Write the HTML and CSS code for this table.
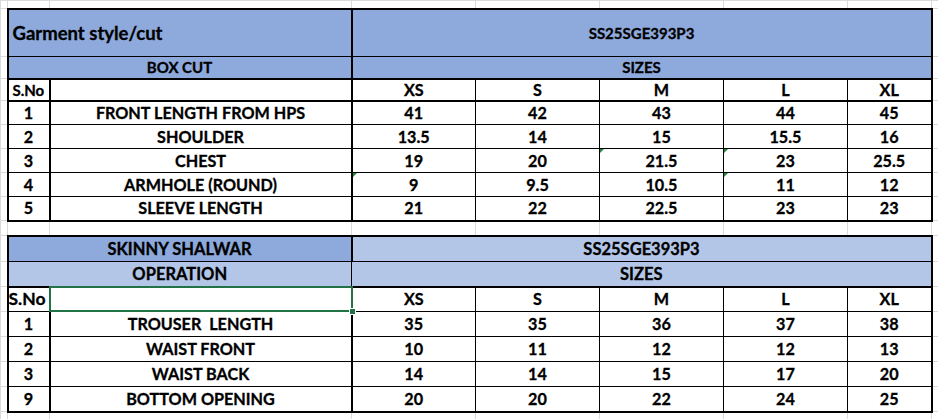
FILE: index.html
```html
<!DOCTYPE html>
<html>
<head>
<meta charset="utf-8">
<title>Measurement sheet</title>
<link rel="stylesheet" href="styles.css">
</head>
<body>
<table class="sheet">
  <colgroup>
    <col class="c-a"><col class="c-b"><col class="c-c">
    <col class="c-s"><col class="c-s"><col class="c-s"><col class="c-s">
    <col class="c-h"><col class="c-i">
  </colgroup>
  <tbody>
    <tr class="r-top"><td></td><td></td><td></td><td></td><td></td><td></td><td></td><td></td><td></td></tr>

    <tr class="r-h1">
      <td></td>
      <td colspan="2" class="t blue bt bl br txt-left title">Garment style/cut</td>
      <td colspan="5" class="t blue bt br sm">SS25SGE393P3</td>
      <td></td>
    </tr>
    <tr class="r-22">
      <td></td>
      <td colspan="2" class="t blue bl br bb sm">BOX CUT</td>
      <td colspan="5" class="t blue br bb sm">SIZES</td>
      <td></td>
    </tr>
    <tr class="r-22">
      <td></td>
      <td class="t bl br txt-left sno">S.No</td>
      <td class="t br"></td>
      <td class="t">XS</td><td class="t">S</td><td class="t">M</td><td class="t">L</td><td class="t br">XL</td>
      <td></td>
    </tr>
    <tr class="r-24">
      <td></td>
      <td class="t bl br bt">1</td>
      <td class="t br bt">FRONT LENGTH FROM HPS</td>
      <td class="t bt">41</td><td class="t bt">42</td><td class="t bt">43</td><td class="t bt">44</td><td class="t br bt">45</td>
      <td></td>
    </tr>
    <tr class="r-24">
      <td></td>
      <td class="t bl br">2</td>
      <td class="t br">SHOULDER</td>
      <td class="t">13.5</td><td class="t">14</td><td class="t">15</td><td class="t">15.5</td><td class="t br">16</td>
      <td></td>
    </tr>
    <tr class="r-24">
      <td></td>
      <td class="t bl br">3</td>
      <td class="t br">CHEST</td>
      <td class="t">19</td><td class="t">20</td><td class="t err">21.5</td><td class="t err">23</td><td class="t br">25.5</td>
      <td></td>
    </tr>
    <tr class="r-24">
      <td></td>
      <td class="t bl br">4</td>
      <td class="t br">ARMHOLE (ROUND)</td>
      <td class="t err">9</td><td class="t">9.5</td><td class="t">10.5</td><td class="t err">11</td><td class="t br">12</td>
      <td></td>
    </tr>
    <tr class="r-24">
      <td></td>
      <td class="t bl br bb">5</td>
      <td class="t br bb">SLEEVE LENGTH</td>
      <td class="t bb">21</td><td class="t bb">22</td><td class="t bb">22.5</td><td class="t bb">23</td><td class="t br bb">23</td>
      <td></td>
    </tr>

    <tr class="r-gap"><td></td><td></td><td></td><td></td><td></td><td></td><td></td><td></td><td></td></tr>

    <tr class="r-26">
      <td></td>
      <td colspan="2" class="t blue bt bl br big">SKINNY SHALWAR</td>
      <td colspan="5" class="t light bt br big">SS25SGE393P3</td>
      <td></td>
    </tr>
    <tr class="r-25">
      <td></td>
      <td colspan="2" class="t light bl bb big">OPERATION</td>
      <td colspan="5" class="t light br bb big">SIZES</td>
      <td></td>
    </tr>
    <tr class="r-25">
      <td></td>
      <td class="t bl br txt-left sno2">S.No</td>
      <td class="t br sel"></td>
      <td class="t">XS</td><td class="t">S</td><td class="t">M</td><td class="t">L</td><td class="t br">XL</td>
      <td></td>
    </tr>
    <tr class="r-25">
      <td></td>
      <td class="t bl br">1</td>
      <td class="t br pre">TROUSER  LENGTH</td>
      <td class="t">35</td><td class="t">35</td><td class="t">36</td><td class="t">37</td><td class="t br">38</td>
      <td></td>
    </tr>
    <tr class="r-25">
      <td></td>
      <td class="t bl br">2</td>
      <td class="t br">WAIST FRONT</td>
      <td class="t">10</td><td class="t">11</td><td class="t">12</td><td class="t">12</td><td class="t br">13</td>
      <td></td>
    </tr>
    <tr class="r-25">
      <td></td>
      <td class="t bl br">3</td>
      <td class="t br">WAIST BACK</td>
      <td class="t">14</td><td class="t">14</td><td class="t">15</td><td class="t">17</td><td class="t br">20</td>
      <td></td>
    </tr>
    <tr class="r-25">
      <td></td>
      <td class="t bl br bb">9</td>
      <td class="t br bb">BOTTOM OPENING</td>
      <td class="t bb">20</td><td class="t bb">20</td><td class="t bb">22</td><td class="t bb">24</td><td class="t br bb">25</td>
      <td></td>
    </tr>

    <tr class="r-end"><td></td><td></td><td></td><td></td><td></td><td></td><td></td><td></td><td></td></tr>
  </tbody>
</table>
</body>
</html>
```
FILE: styles.css
```css
html, body {
  margin: 0;
  padding: 0;
  background: #ffffff;
  overflow: hidden;
}

.sheet {
  border-collapse: collapse;
  table-layout: fixed;
  width: 938px;
  font-family: Lato, "Liberation Sans", sans-serif;
  font-weight: 700;
  color: #000000;
  -webkit-text-stroke: 0.3px #000000;
}

.c-a { width: 7px; }
.c-b { width: 42px; }
.c-c { width: 302px; }
.c-s { width: 124px; }
.c-h { width: 84px; }
.c-i { width: 7px; }

.sheet td {
  box-sizing: border-box;
  border: 1px solid #dadada;
  padding: 0;
  text-align: center;
  vertical-align: middle;
  white-space: nowrap;
  font-size: 16.2px;
  line-height: 16px;
  overflow: visible;
}

.r-top td { height: 8px; }
.r-h1 td { height: 48px; }
.r-22 td { height: 22px; }
.r-24 td { height: 24px; }
.r-gap td { height: 15px; }
.r-26 td { height: 26px; }
.r-25 td { height: 25px; }
.r-end td { height: 8px; }

.sheet td.t { border: 1px solid #000000; }
.sheet td.bt { border-top: 2px solid #000000; }
.sheet td.bb { border-bottom: 2px solid #000000; }
.sheet td.bl { border-left: 2px solid #000000; }
.sheet td.br { border-right: 2px solid #000000; }

.blue { background: #8ea9db; }
.light { background: #b4c6e7; }

.txt-left { text-align: left !important; }
.sheet td.big { font-size: 16.5px; }
.sheet td.sm { font-size: 15px; }
.sheet td.title { padding-left: 4px; font-size: 18.5px; }
.sheet td.sno { padding-left: 4px; font-size: 15px; }
.sheet td.sno2 { padding-left: 0; font-size: 17.5px; }
.pre { white-space: pre !important; }

.err { position: relative; }
.err::before {
  content: "";
  position: absolute;
  top: 0;
  left: 0;
  width: 0;
  height: 0;
  border-top: 4px solid #1f8a3a;
  border-right: 4px solid transparent;
}

.sel { position: relative; }
.sel::after {
  content: "";
  position: absolute;
  top: -2px;
  left: -2px;
  right: -2px;
  bottom: -1px;
  border: 2px solid #217346;
}
.sel::before {
  content: "";
  position: absolute;
  right: -5px;
  bottom: -4px;
  width: 5px;
  height: 5px;
  background: #217346;
  border: 1px solid #ffffff;
  z-index: 2;
}
```
